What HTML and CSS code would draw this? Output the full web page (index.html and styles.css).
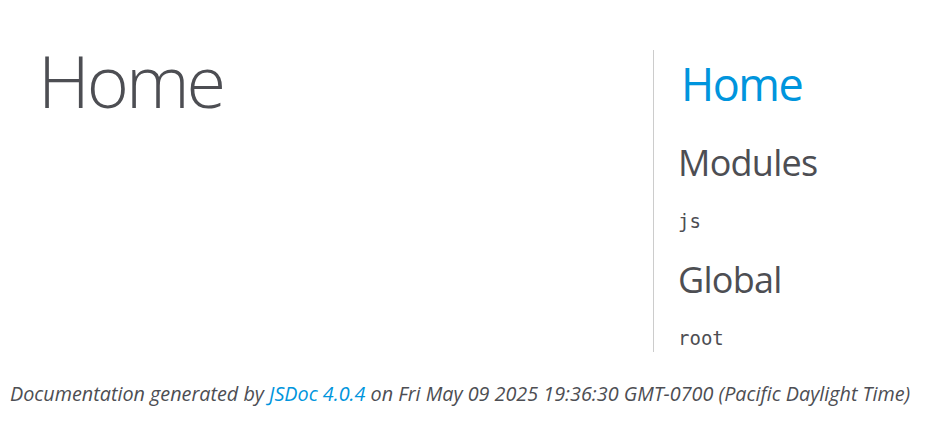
FILE: index.html
```html
<!DOCTYPE html>
<html lang="en">
<head>
<meta charset="utf-8">
<title>Home</title>
<link rel="stylesheet" href="styles.css">
</head>
<body>
<div class="page">
  <div class="main">
    <h1 class="page-title">Home</h1>
  </div>
  <nav class="nav">
    <h2 class="nav-home"><a class="link" href="#">Home</a></h2>
    <h3 class="nav-title">Modules</h3>
    <ul class="nav-list">
      <li class="nav-item"><a class="nav-link" href="#">js</a></li>
    </ul>
    <h3 class="nav-title">Global</h3>
    <ul class="nav-list">
      <li class="nav-item"><a class="nav-link" href="#">root</a></li>
    </ul>
  </nav>
</div>
<footer class="footer">
  Documentation generated by <a class="link" href="#">JSDoc 4.0.4</a> on Fri May 09 2025 19:36:30 GMT-0700 (Pacific Daylight Time)
</footer>
</body>
</html>
```

FILE: styles.css
```css
html {
  background: #fff;
}

body {
  margin: 0;
  font-family: "Open Sans", sans-serif;
  font-size: 21px;
  line-height: 1.5;
  color: #4d4e53;
  background: #fff;
}

.link {
  color: #0095dd;
  text-decoration: none;
}

.page {
  display: flex;
  align-items: flex-start;
}

.main {
  flex: 1;
  min-width: 0;
}

.page-title {
  font-family: "Open Sans", sans-serif;
  font-weight: 300;
  font-size: 72px;
  letter-spacing: -3px;
  margin: 26px 36px 30px 38px;
}

.nav {
  width: 276px;
  box-sizing: border-box;
  margin-top: 50px;
  border-left: 1px solid #ccc;
  padding-left: 24px;
}

.nav-home {
  font-size: 45px;
  font-weight: 400;
  letter-spacing: -1.5px;
  margin: 0 0 18px 3px;
}

.nav-title {
  font-size: 36px;
  font-weight: 400;
  letter-spacing: -0.75px;
  margin: 18px 0 18px;
}

.nav-list {
  font-size: 100%;
  line-height: 25.5px;
  padding: 0;
  margin: 0;
  list-style: none;
}

.nav-item {
  margin-top: 9px;
}

.nav-link {
  font-family: "DejaVu Sans Mono", monospace;
  font-size: 19px;
  line-height: 27px;
  color: #4d4e53;
  text-decoration: none;
}

.footer {
  display: block;
  padding: 9px 9px 9px 10px;
  margin-top: 18px;
  font-style: italic;
  font-size: 19.8px;
}
```
